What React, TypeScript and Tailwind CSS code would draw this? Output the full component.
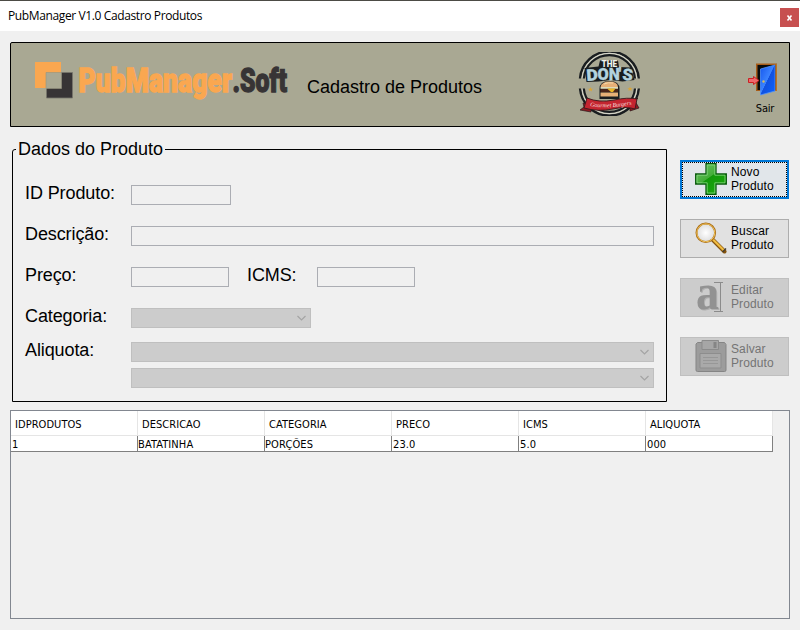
import React from "react";

const COLUMNS = ["IDPRODUTOS", "DESCRICAO", "CATEGORIA", "PRECO", "ICMS", "ALIQUOTA"];
const ROW = ["1", "BATATINHA", "PORÇÕES", "23.0", "5.0", "000"];

function Brand() {
  return (
    <svg width="262" height="44" viewBox="34 61 262 44" className="block overflow-visible">
      <path d="M46.500 72.500h26v25.500h-26z" fill="#373435" stroke="#77766c" strokeWidth=".8" />
      <path d="M35 62h26v26H35z" fill="#faa750" />
      <path d="M46 72.500h15.500v16H46z" fill="#a9a893" stroke="#96947f" strokeWidth=".6" />
      <g fontFamily="'Roboto', 'Liberation Sans', sans-serif" fontWeight="900" fontSize="33" strokeWidth="1.300">
        <text x="78.500" y="92" textLength="153.500" lengthAdjust="spacingAndGlyphs" fill="#faa750" stroke="#faa750">PubManager</text>
        <text x="232.500" y="92" textLength="54.500" lengthAdjust="spacingAndGlyphs" fill="#373435" stroke="#373435">.Soft</text>
      </g>
    </svg>
  );
}

function DonsLogo() {
  return (
    <svg width="64" height="64" viewBox="578 52 64 64" className="block">
      <g fill="none">
        <path d="M580 78.500A29.500 29.500 0 0 1 638.800 78.500M580 88.500A29.500 29.500 0 0 0 638.800 88.500" stroke="#191d20" strokeWidth="2.400" />
        <path d="M582 78.500A27.500 27.500 0 0 1 636.800 78.500M582 88.500A27.500 27.500 0 0 0 636.800 88.500" stroke="#d5d5ca" strokeWidth="1.200" />
        <path d="M583.800 78.500A25.700 25.700 0 0 1 635 78.500M583.800 88.500A25.700 25.700 0 0 0 635 88.500" stroke="#191d20" strokeWidth="2.200" />
      </g>
      <path d="M600 60.500h18l1 6.500 12 .5 3.500 12.500-12 1.500-12-1.500-12 1.500-12 .5-2-14 14-1.500z" fill="#191d20" />
      <g fontFamily="'Roboto', sans-serif" fontWeight="900">
        <text x="601.500" y="67.200" fontSize="8.500" textLength="15.500" lengthAdjust="spacingAndGlyphs" fill="#f1f2ec">THE</text>
        <g fill="#b3d2de" stroke="#b3d2de" strokeWidth=".3" fontSize="16">
          <text x="586.800" y="80.800" transform="rotate(-4 588 80)" textLength="11.500" lengthAdjust="spacingAndGlyphs">D</text>
          <text x="597.600" y="79.800" textLength="11.200" lengthAdjust="spacingAndGlyphs">O</text>
          <text x="608.700" y="79.800" textLength="11" lengthAdjust="spacingAndGlyphs">N</text>
          <text x="618.800" y="79.800">'</text>
          <text x="622" y="79.800" transform="rotate(5 622 79)" textLength="10.500" lengthAdjust="spacingAndGlyphs">S</text>
        </g>
      </g>
      <path d="M599.500 89q0-8 10-8t10 8v10h-20z" fill="#191d20" />
      <path d="M600.500 87q1-5.500 9-5.500t8.500 5.500z" fill="#e7b077" />
      <path d="M604 84q4-2 9-1" stroke="#f5d9ac" fill="none" />
      <path d="M600.500 87h17.500v1.800h-17.500z" fill="#dedbbb" />
      <path d="M600.500 89h17.500v3h-17.500z" fill="#4a251a" />
      <path d="M607 88.500h8.500l-2.500 3.500h-2z" fill="#e9b526" />
      <path d="M600.500 92.500h17.500v4h-17.500z" fill="#e7b077" />
      <path d="M590.500 87l.7 1.700 1.800.1-1.400 1.100.5 1.700-1.600-1-1.500 1 .4-1.700-1.400-1.100 1.800-.1zm39.500-.500l.7 1.700 1.800.1-1.400 1.100.5 1.700-1.600-1-1.500 1 .4-1.700-1.400-1.100 1.800-.1z" fill="#d9a63a" />
      <path d="M580 110l4-3-1-4 8 2v7zM638 98l-3 3 4 7-9 3v-8z" fill="#8d1b22" stroke="#2b191a" strokeWidth=".7" />
      <path d="M587 98q12 5 27 2 14-3 23-1l-2 10q-9-3-22 0-15 3-29-1z" fill="#c42530" stroke="#391a1c" strokeWidth=".9" />
      <path id="ribbon" d="M590 106.200q20 3 43-2" fill="none" />
      <text fontFamily="'Liberation Serif', serif" fontStyle="italic" fontSize="6" fill="#f6dcda"><textPath href="#ribbon">Gourmet Burgers</textPath></text>
    </svg>
  );
}

function DoorIcon() {
  return (
    <svg width="32" height="34" viewBox="747 62 32 34" className="block">
      <defs>
        <linearGradient id="door" x2="1" y2="1"><stop stopColor="#1556ed" /><stop offset=".48" stopColor="#3b83ff" /><stop offset=".5" stopColor="#1150df" /><stop offset="1" stopColor="#0a63ff" /></linearGradient>
      </defs>
      <path d="M756 63.500h21V91h-21z" fill="#a75c19" />
      <path d="M757.500 65h18v25h-18z" fill="#080b0c" />
      <path d="M760.500 69l14.500-4v26l-14.500 4z" fill="url(#door)" stroke="#4c91ff" strokeWidth=".8" />
      <path d="M776.300 64v27" stroke="#bd731f" strokeWidth="1.400" />
      <path d="M748.500 78.500h5v-2l5.500 4-5.500 4v-2h-5z" fill="#ef686b" stroke="#cb2022" />
      <circle cx="763.500" cy="81.500" r="1.200" fill="#d5bd5c" />
    </svg>
  );
}

function PlusIcon() {
  return (
    <svg width="32" height="32" viewBox="0 0 32 32">
      <defs><linearGradient id="plus" x2=".7" y2="1"><stop stopColor="#6fc56d" /><stop offset=".5" stopColor="#43ad38" /><stop offset=".52" stopColor="#12990a" /><stop offset="1" stopColor="#19a70d" /></linearGradient></defs>
      <path d="M11 .7h10v10.300h10.300v10H21v10.300H11V21H.7V11H11z" fill="url(#plus)" stroke="#07590c" strokeWidth="1.300" />
      <path d="M12.200 2h7.600v10.200H30v7.600H19.800V30h-7.600V19.800H2v-7.600h10.200z" fill="none" stroke="#88d783" strokeWidth=".8" />
    </svg>
  );
}

function SearchIcon() {
  return (
    <svg width="32" height="32" viewBox="0 0 32 32">
      <defs><radialGradient id="lens"><stop stopColor="#ffffff" /><stop offset="1" stopColor="#dddddd" /></radialGradient></defs>
      <path d="M17.500 17.500l12 12" stroke="#85530c" strokeWidth="4" strokeLinecap="round" />
      <path d="M17.500 17l11 11" stroke="#f1bd43" strokeWidth="2.200" strokeLinecap="round" />
      <path d="M27.500 30l3.500-3.500" stroke="#3e3b34" strokeWidth="1.500" />
      <circle cx="10.800" cy="10.800" r="9.300" fill="url(#lens)" stroke="#a96c15" strokeWidth="2" />
      <circle cx="10.800" cy="10.800" r="9" fill="none" stroke="#efc35b" strokeWidth="1" />
    </svg>
  );
}

function EditIcon() {
  return (
    <svg width="32" height="32" viewBox="0 0 32 32" className="overflow-visible">
      <g fontFamily="'Liberation Serif', serif" fontWeight="700" fontSize="51">
        <text x="2" y="29" textLength="23" lengthAdjust="spacingAndGlyphs" fill="#b0b0b0">a</text>
        <text x="1" y="28" textLength="23" lengthAdjust="spacingAndGlyphs" fill="#929292">a</text>
      </g>
      <path d="M19 1.500h9M19 30.500h9M25.500 1.500v29" stroke="#8b8b8b" fill="none" />
    </svg>
  );
}

function SaveIcon() {
  return (
    <svg width="32" height="32" viewBox="0 0 32 32">
      <path d="M2.500 2.500h27l1.500 2V30q0 1.500-1.500 1.500h-27Q1 31.500 1 30V4z" fill="#9c9c9c" stroke="#858585" />
      <path d="M7 .5h16.500v9H7z" fill="#a6a6a6" stroke="#8b8b8b" />
      <path d="M18.500 2h3v6h-3z" fill="#858585" />
      <path d="M5 13.500h21V28H5z" fill="#a9a9a9" stroke="#8d8d8d" />
      <path d="M8 17.500h15M8 20.500h15M8 23.500h15" stroke="#979797" />
    </svg>
  );
}

function Label({ children, className = "" }: { children: React.ReactNode; className?: string }) {
  return <label className={`block h-[22px] shrink-0 whitespace-nowrap text-[18px] leading-5 tracking-[-0.1px] ${className}`}>{children}</label>;
}

function Field({ className }: { className: string }) {
  return <input disabled aria-label="Campo" className={`mt-[2px] block h-5 shrink-0 border border-[#abadb3] bg-[#f0f0f0] ${className}`} />;
}

function Combo({ className }: { className: string }) {
  return (
    <div className={`flex h-5 shrink-0 items-center justify-end border border-[#bfbfbf] bg-[#cccccc] pr-1 ${className}`}>
      <svg width="9" height="6" viewBox="0 0 9 6"><path d="M.5 1l4 4 4-4" fill="none" stroke="#a4a4a4" strokeWidth="1.200" /></svg>
    </div>
  );
}

function ActionButton({ icon, label, state = "normal" }: { icon: React.ReactNode; label: string; state?: "normal" | "focused" | "disabled" }) {
  const styles = {
    normal: "border border-[#adadad] bg-[#e1e1e1]",
    focused: "border-2 border-[#0078d7] bg-[#e1e6ea]",
    disabled: "border border-[#bfbfbf] bg-[#cccccc] text-[#747474]",
  };
  return (
    <button disabled={state === "disabled"} className={`flex h-[39px] w-[109px] ${styles[state]}`}>
      <span className={`flex h-full w-full items-center gap-1 text-left ${state === "focused" ? "border border-dotted border-black pl-3" : "pl-[14px]"}`}>
        <span className="-mt-px">{icon}</span>
        <span className="-mt-px text-[12px] leading-[14px] tracking-[0.12px]">{label}<br />Produto</span>
      </span>
    </button>
  );
}

export default function App() {
  return (
    <div className="h-[630px] w-[800px] overflow-hidden bg-[#f0f0f0] font-['Liberation_Sans',Arial,sans-serif] text-black">
      <header className="flex h-[31px] justify-between border-t border-[#4c4b45] bg-white pl-2">
        <h1 className="mt-[7px] whitespace-nowrap font-['Open_Sans','Noto_Sans',sans-serif] text-[12px] leading-4 tracking-[-0.38px]">PubManager V1.0 Cadastro Produtos</h1>
        <button aria-label="Fechar" className="mr-px mt-[7px] flex h-[19px] w-[19px] items-center justify-center bg-[#c75050] text-white">
          <svg width="7" height="6" viewBox="0 0 7 6"><path d="M1.500 .5l4 5M5.500 .5l-4 5" stroke="white" strokeWidth="1.600" /></svg>
        </button>
      </header>

      <section className="ml-[10px] mt-[11px] flex h-[85px] w-[780px] rounded-tl-[2px] border border-black bg-[#a9a893]">
        <div className="ml-[23px] mt-[18px]"><Brand /></div>
        <h2 className="ml-[11px] mt-[33px] w-[271px] whitespace-nowrap text-[18px] leading-[22px]">Cadastro de Produtos</h2>
        <div className="mt-[9px]"><DonsLogo /></div>
        <button className="ml-[104px] mt-[19px] flex w-[34px] flex-col items-center">
          <DoorIcon />
          <span className="ml-1 mt-[5px] font-['DejaVu_Sans_Condensed','DejaVu_Sans',sans-serif] text-[11px] leading-[16px] tracking-[-0.2px]">Sair</span>
        </button>
      </section>

      <main className="flex h-[283px] items-start">
        <fieldset className="ml-3 mt-[11px] h-[264px] w-[655px] shrink-0 rounded-tl-[3px] border border-black">
          <legend className="ml-[3px] h-[22px] whitespace-nowrap px-[2px] text-[18px] leading-[22px]">Dados do Produto</legend>
          <div className="flex flex-col pl-3">
            <div className="mt-[23px] flex h-[22px]"><Label className="w-[106px]">ID Produto:</Label><Field className="w-[100px]" /></div>
            <div className="mt-[19px] flex h-[22px]"><Label className="w-[106px]">Descrição:</Label><Field className="w-[523px]" /></div>
            <div className="mt-[19px] flex h-[22px]"><Label className="w-[106px]">Preço:</Label><Field className="w-[98px]" /><Label className="ml-[18px] w-[70px]">ICMS:</Label><Field className="w-[98px]" /></div>
            <div className="mt-[19px] flex h-[22px] items-end"><Label className="w-[106px]">Categoria:</Label><Combo className="w-[180px]" /></div>
            <div className="mt-3 flex"><Label className="w-[106px]">Aliquota:</Label><div className="mt-[2px] flex flex-col gap-[6px]"><Combo className="w-[523px]" /><Combo className="w-[523px]" /></div></div>
          </div>
        </fieldset>
        <nav className="ml-[13px] mt-[33px] flex flex-col gap-5">
          <ActionButton icon={<PlusIcon />} label="Novo" state="focused" />
          <ActionButton icon={<SearchIcon />} label="Buscar" />
          <ActionButton icon={<EditIcon />} label="Editar" state="disabled" />
          <ActionButton icon={<SaveIcon />} label="Salvar" state="disabled" />
        </nav>
      </main>

      <section className="ml-[10px] h-[209px] w-[780px] border border-[#828790] font-['DejaVu_Sans_Condensed','DejaVu_Sans',sans-serif] text-[11px]">
        <div className="grid w-[762px] grid-cols-6 bg-white">
          {COLUMNS.map((column) => <div key={column} className="h-[25px] border-b border-r border-[#e5e5e5] pl-1 pt-[6px] leading-[16px] tracking-[0.05px]">{column}</div>)}
          {ROW.map((value, index) => <div key={index} className="h-4 border-b border-r border-[#808080] pl-px leading-[18px] tracking-[0.1px]"><span className={index === 1 || index === 2 ? "-ml-px" : ""}>{value}</span></div>)}
        </div>
      </section>
    </div>
  );
}
